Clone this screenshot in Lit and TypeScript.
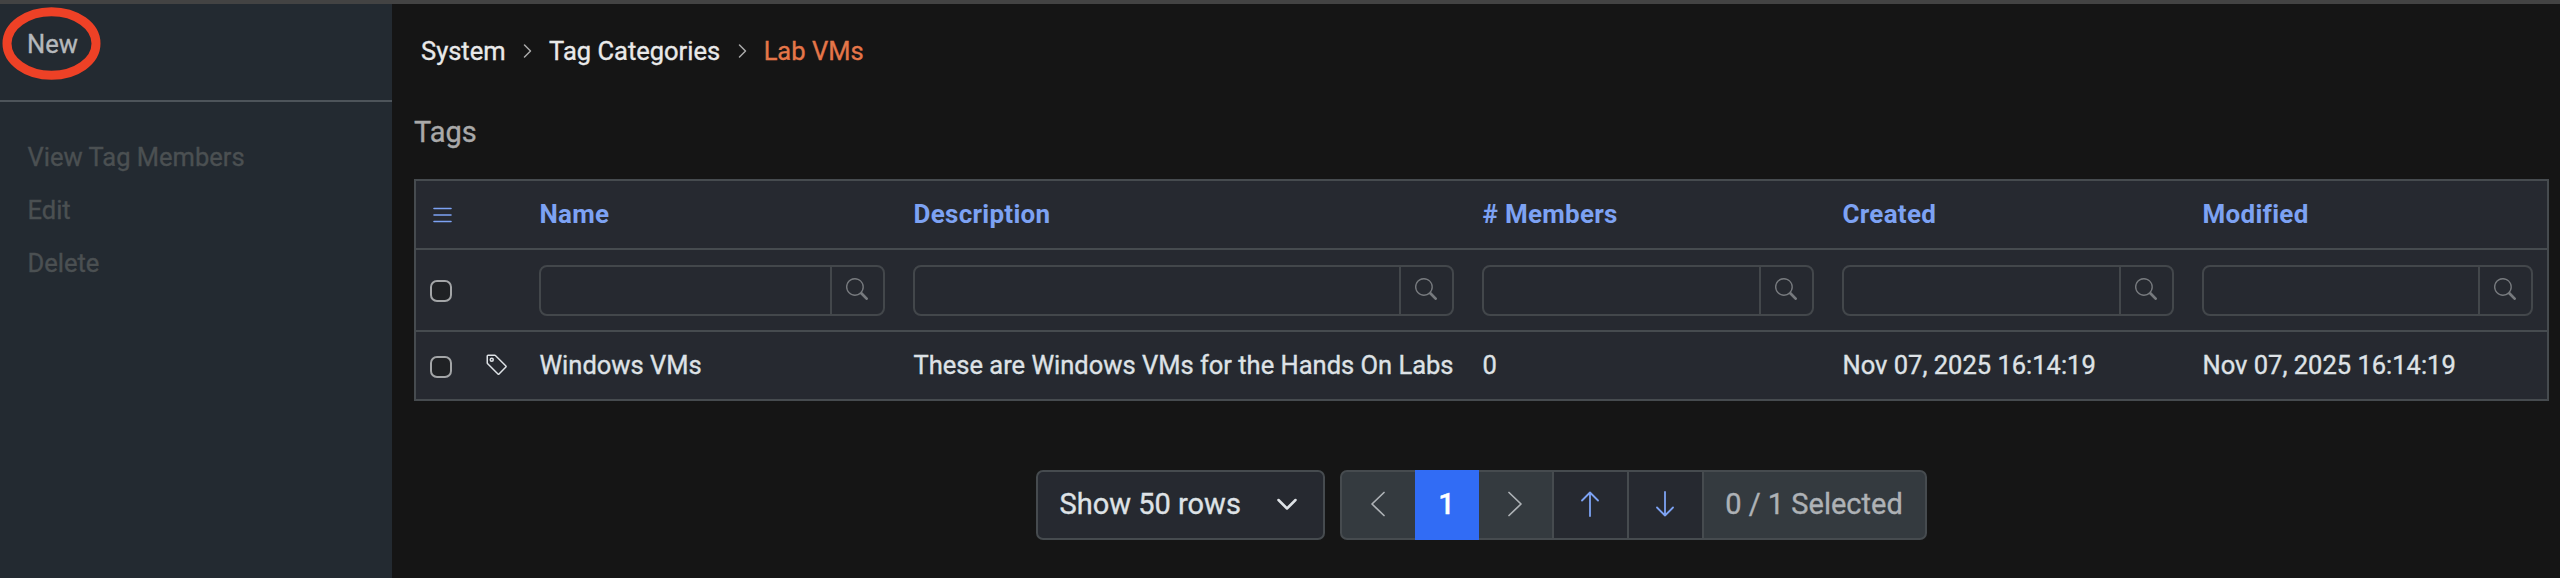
import { LitElement, html, css, svg } from "lit";
import { customElement } from "lit/decorators.js";

const search = html`<svg class="search" viewBox="0 0 16 16"><path d="M11.742 10.344a6.5 6.5 0 1 0-1.397 1.398h-.001q.044.06.098.115l3.85 3.85a1 1 0 0 0 1.415-1.414l-3.85-3.85a1 1 0 0 0-.115-.1zM12 6.5a5.5 5.5 0 1 1-11 0 5.5 5.5 0 0 1 11 0"/></svg>`;
const stroke = (cls: string, w: number, h: number, d: string, sw: number) => html`<svg class="line ${cls}" width=${w} height=${h} viewBox="0 0 ${w} ${h}" stroke-width=${sw}>${svg`<path d=${d}/>`}</svg>`;

@customElement("app-root")
export class AppRoot extends LitElement {
  static styles = css`
    :host { display: block; }
    * { box-sizing: border-box; }
    .page { height: 578px; display: flex; flex-direction: column; border-top: 4px solid #434343; background: #151515; color: #dee2e6; font: 400 25.5px/30px Roboto, sans-serif; -webkit-text-stroke: 0.35px currentColor; overflow: hidden; white-space: nowrap; }
    .body { flex: 1; display: flex; }
    .side { width: 392px; background: #232a31; }
    .new { position: relative; height: 98px; border-bottom: 2px solid #4d545a; padding: 25px 27px; color: #b5b9bc; }
    .ring { position: absolute; left: 2px; top: 2px; width: 100px; height: 75px; }
    .menu { display: flex; flex-direction: column; gap: 23px; padding: 40px 27.5px; color: #4b5052; }
    .main { flex: 1; padding: 0 11px 0 22px; display: flex; flex-direction: column; }
    .crumbs { display: flex; align-items: center; padding: 32px 0 0 7px; color: #e9e9e9; }
    .crumbs .here { color: #e57649; }
    .sep { margin: 0 17px 0 17.5px; color: #aaa; }
    h2 { margin: 48px 0 0; font-size: 29px; line-height: 36px; font-weight: 400; color: #a9a9a9; }
    .table { margin-top: 29px; border: 2px solid #464b4f; background: #262930; display: grid; grid-template-columns: 109px 374px 569px 360px 360px 1fr; grid-template-rows: 69px 82px 67px; }
    .cell { display: flex; align-items: center; padding: 0 14.5px 0 14px; }
    .text { padding: 0 14px 2px 14.5px; }
    .r1, .r2 { border-bottom: 2px solid #464b4f; }
    .r1 { font-size: 26px; font-weight: 700; letter-spacing: 0.28px; color: #7da2f3; -webkit-text-stroke: 0; }
    .field { flex: 1; height: 51px; display: flex; border: 2px solid #43474b; border-radius: 8px; }
    .field i { flex: 1; }
    .field span { width: 53px; border-left: 2px solid #43474b; display: flex; align-items: center; justify-content: center; padding-bottom: 2px; }
    .search { width: 22px; height: 22px; fill: #777a7e; }
    .box { width: 22px; height: 22px; border: 2.5px solid #a3a5a7; border-radius: 7px; background: #1f2124; position: relative; top: 1px; }
    .tag { width: 24px; height: 24px; margin: 0 0 2px 33px; fill: #dee2e6; }
    .line { fill: none; stroke: currentColor; stroke-linecap: round; stroke-linejoin: round; display: block; }
    .burger { margin-left: 1px; }
    .pager { display: flex; gap: 15px; justify-content: center; margin: 69px 0 0; font-size: 29px; padding-right: 1px; }
    .select, .group { height: 70px; border: 2px solid #464b4f; border-radius: 7px; display: flex; align-items: center; }
    .select { width: 289px; background: #262930; padding: 0 26px 2px 22px; justify-content: space-between; }
    .group { width: 587px; background: #343a3f; color: #aeb2b6; align-items: stretch; }
    .group div { display: flex; align-items: center; justify-content: center; }
    .step { width: 73px; }
    .on { width: 64px; margin: -2px 0; background: #316cf5; color: #fff; font-weight: 500; padding-bottom: 2px; }
    .arrow { width: 75px; background: #262930; color: #7da2f3; border-left: 2px solid #464b4f; }
    .arrow, .step { padding-bottom: 2px; }
    .count { flex: 1; border-left: 2px solid #464b4f; padding-bottom: 2px; }
  `;

  render() {
    const heads = ["Name", "Description", "# Members", "Created", "Modified"];
    const row = ["Windows VMs", "These are Windows VMs for the Hands On Labs", "0", "Nov 07, 2025 16:14:19", "Nov 07, 2025 16:14:19"];
    const sep = stroke("sep", 9, 16, "M1.5 2 7.5 8l-6 6", 1.5);
    return html`<div class="page"><div class="body">
      <nav class="side">
        <div class="new">New
          <svg class="ring" viewBox="0 0 100 75"><ellipse cx="49.5" cy="37.5" rx="44.5" ry="31.8" fill="none" stroke="#ee4126" stroke-width="9"/></svg>
        </div>
        <div class="menu"><span>View Tag Members</span><span>Edit</span><span>Delete</span></div>
      </nav>
      <main class="main">
        <div class="crumbs"><span>System</span>${sep}<span>Tag Categories</span>${sep}<span class="here">Lab VMs</span></div>
        <h2>Tags</h2>
        <div class="table">
          <div class="cell r1">${stroke("burger", 22, 18, "M3 2.5h17M3 9h17M3 15.5h17", 1.6)}</div>
          ${heads.map((h) => html`<div class="cell text r1">${h}</div>`)}
          <div class="cell r2"><div class="box"></div></div>
          ${heads.map(() => html`<div class="cell r2"><div class="field"><i></i><span>${search}</span></div></div>`)}
          <div class="cell"><div class="box"></div><svg class="tag" viewBox="0 0 16 16"><path d="M6 4.5a1.5 1.5 0 1 1-3 0 1.5 1.5 0 0 1 3 0m-1 0a.5.5 0 1 0-1 0 .5.5 0 0 0 1 0"/><path d="M2 1h4.586a1 1 0 0 1 .707.293l7 7a1 1 0 0 1 0 1.414l-4.586 4.586a1 1 0 0 1-1.414 0l-7-7A1 1 0 0 1 1 6.586V2a1 1 0 0 1 1-1m0 5.586 7 7L13.586 9l-7-7H2z"/></svg></div>
          ${row.map((t) => html`<div class="cell text">${t}</div>`)}
        </div>
        <div class="pager">
          <div class="select"><span>Show 50 rows</span>${stroke("", 20, 13, "M1.5 2 10 10.5 18.5 2", 2.5)}</div>
          <div class="group">
            <div class="step">${stroke("", 16, 26, "M14 1.5 2 13l12 11.5", 1.7)}</div>
            <div class="on">1</div>
            <div class="step">${stroke("", 16, 26, "M2 1.5 14 13 2 24.5", 1.7)}</div>
            <div class="arrow">${stroke("", 18, 26, "M9 25V1.5M1 9.5l8-8 8 8", 1.8)}</div>
            <div class="arrow">${stroke("", 18, 26, "M9 1v23.5M1 16.5l8 8 8-8", 1.8)}</div>
            <div class="count">0 / 1 Selected</div>
          </div>
        </div>
      </main>
    </div></div>`;
  }
}
